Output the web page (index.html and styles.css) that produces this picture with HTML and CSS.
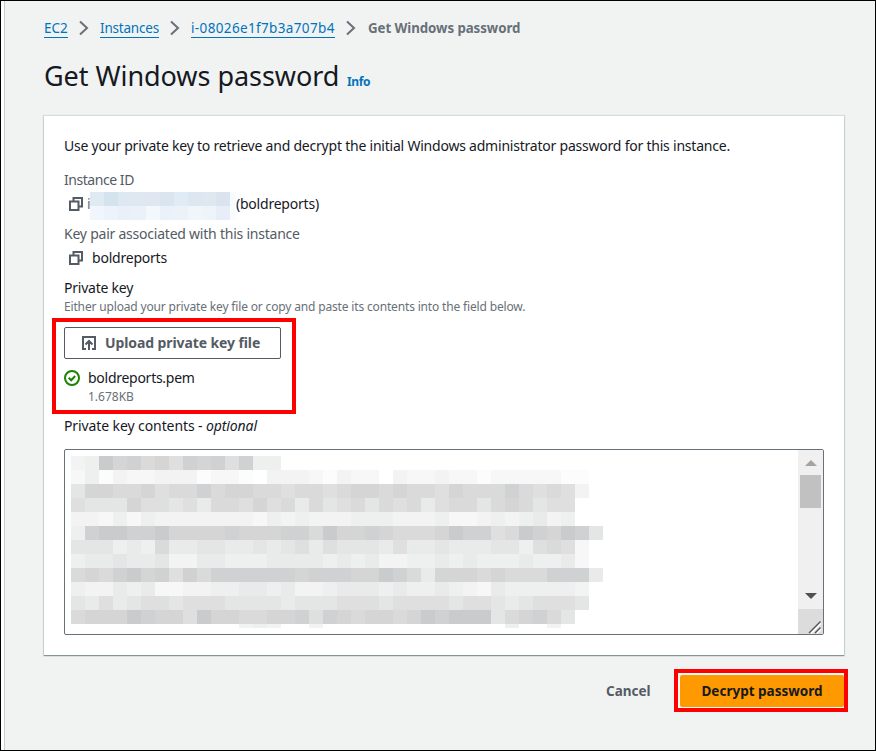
FILE: index.html
```html
<!DOCTYPE html>
<html lang="en">
<head>
<meta charset="utf-8">
<title>Get Windows password</title>
<link rel="stylesheet" href="styles.css">
</head>
<body>
<div class="page">
  <nav class="crumbs">
    <a class="c1"><span>EC2</span></a>
    <svg viewBox="0 0 10 16"><path d="M1 1.500 8 8 1 14.500"/></svg>
    <a class="c2"><span>Instances</span></a>
    <svg viewBox="0 0 10 16"><path d="M1 1.500 8 8 1 14.500"/></svg>
    <a class="c3"><span>i-08026e1f7b3a707b4</span></a>
    <svg viewBox="0 0 10 16"><path d="M1 1.500 8 8 1 14.500"/></svg>
    <b>Get Windows password</b>
  </nav>
  <header><h1>Get Windows password</h1><a class="info">Info</a></header>
  <main class="card">
    <p class="intro">Use your private key to retrieve and decrypt the initial Windows administrator password for this instance.</p>
    <div class="label id-label">Instance ID</div>
    <div class="value">
      <svg class="copy" viewBox="0 0 14 14"><path d="M4.500 4V1H13v8.500h-3M1 4.500h8.500V13H1z"/></svg>
      <span class="first">i</span><span class="redacted" id="redacted"></span><span class="owner">(boldreports)</span>
    </div>
    <div class="label pair-label">Key pair associated with this instance</div>
    <div class="value">
      <svg class="copy" viewBox="0 0 14 14"><path d="M4.500 4V1H13v8.500h-3M1 4.500h8.500V13H1z"/></svg>
      <span class="pair">boldreports</span>
    </div>
    <div class="label dark">Private key</div>
    <div class="hint"><span>Either upload your private key file or copy and paste its contents into the field below.</span></div>
    <section class="upload">
      <button class="btn-upload"><svg viewBox="0 0 14 14"><path d="M4 13H1V1h12v12h-3M7 14V5M3.500 8.500 7 5l3.500 3.500"/></svg><span>Upload private key file</span></button>
      <div class="file">
        <svg viewBox="0 0 16 16"><circle cx="8" cy="8" r="7"/><path d="m4.700 7.700 2.500 2.500 4-4.200"/></svg>
        <div><div class="fname"><span>boldreports.pem</span></div><div class="fsize">1.678KB</div></div>
      </div>
    </section>
    <div class="label dark contents"><span>Private key contents - <i>optional</i></span></div>
    <div class="textarea">
      <div class="mosaic" id="mosaic"></div>
      <div class="scroll">
        <svg class="up" viewBox="0 0 12 6"><path d="M0 6 6 0l6 6z"/></svg>
        <div class="thumb"></div>
        <svg class="down" viewBox="0 0 12 6"><path d="M0 0h12L6 6z"/></svg>
        <div class="corner"><svg viewBox="0 0 14 14"><path class="lit" d="m3 13.500 10-10M9 13.500l4-4"/><path d="M1 13 12.500 1.500M7 13l5.500-5.500"/></svg></div>
      </div>
    </div>
  </main>
  <footer>
    <a class="cancel">Cancel</a>
    <div class="ring"><button class="primary"><span>Decrypt password</span></button></div>
  </footer>
</div>
<script src="script.js"></script>
</body>
</html>
```
FILE: styles.css
```css
* { box-sizing: border-box; }
body { margin: 0; font-family: "Noto Sans", "Open Sans", sans-serif; font-size: 14px; color: #16191f; background: #fff; }
.page { width: 876px; height: 751px; border: 1px solid #000; padding-left: 39px; background: linear-gradient(90deg, #fff 3px, #c9ccd3 3px, #c9ccd3 4px, #f1f3f3 4px); overflow: hidden; }
svg { display: block; flex: none; fill: none; }
a, span, b, h1 { white-space: nowrap; }
.crumbs { display: flex; align-items: center; height: 22px; margin: 16px 0 0 4px; line-height: 20px; font-size: 13.5px; }
.crumbs a { color: #0073bb; border-bottom: 1px solid #0073bb; height: 20px; line-height: 20px; }
.crumbs svg { width: 10px; height: 16px; margin: 0 11px; stroke: #687078; stroke-width: 2; }
.c1 { width: 24px; }
.c2 { width: 59px; letter-spacing: -0.2px; }
.c3 { width: 144px; letter-spacing: 0.36px; }
.crumbs b { color: #687078; font-weight: 700; margin-left: 1px; font-size: 13.3px; letter-spacing: -0.07px; }
header { display: flex; align-items: baseline; height: 76px; margin-left: 4px; padding-top: 19px; }
h1 { width: 303px; margin: 0; font-size: 27px; line-height: 36px; font-weight: 400; letter-spacing: -0.05px; }
.info { color: #0073bb; font-size: 12px; font-weight: 700; letter-spacing: -0.4px; }
.card { width: 800px; height: 539px; margin: 1px 0 0 4px; padding: 19px 20px 0; background: #fff; box-shadow: 0 1px 1px #879596, 0 0 1px 1px #d5dbdb; }
.intro { margin: 0; height: 35px; line-height: 22px; white-space: nowrap; letter-spacing: -0.22px; }
.label { height: 20px; line-height: 20px; color: #545b64; letter-spacing: -0.23px; }
.id-label { letter-spacing: -0.45px; }
.dark { color: #16191f; }
.value { display: flex; align-items: flex-start; height: 28px; margin: 2px 0 4px; padding-left: 5px; line-height: 20px; letter-spacing: -0.22px; }
.value .copy { margin-top: 5px; }
.value .first, .value .owner { margin-top: 2px; }
.pair-label + .value { height: 24px; margin-bottom: 8px; }
.copy { width: 14px; height: 14px; stroke: #545b64; stroke-width: 2; }
.first { width: 7px; padding-left: 4px; color: #687078; }
.redacted { display: grid; grid-template-columns: repeat(10, 14px) 6px; grid-template-rows: 14px 14px; position: relative; }
.pair { margin: 2px 0 0 9px; }
.hint { height: 18px; line-height: 18px; color: #687078; font-size: 12px; letter-spacing: -0.16px; }
.upload { width: 244px; height: 96px; margin: 2px 0 0 -12px; border: 4px solid #f00; padding: 5px 8px; }
.btn-upload { display: flex; align-items: center; width: 217px; height: 32px; padding: 0 0 2px 17px; border: 1px solid #545b64; border-radius: 2px; background: #fff; color: #545b64; font: 700 14px "Noto Sans", sans-serif; letter-spacing: -0.1px; }
.btn-upload svg { width: 14px; height: 14px; margin: 2px 9px 0 0; stroke: #545b64; stroke-width: 2; }
.file { display: flex; margin-top: 9px; gap: 8px; }
.file svg { width: 16px; height: 16px; margin-top: 2px; stroke: #1d8102; stroke-width: 2; }
.fname { height: 20px; line-height: 20px; letter-spacing: -0.27px; }
.fsize { font-size: 12px; line-height: 17px; color: #687078; }
.contents { margin-top: 2px; letter-spacing: -0.1px; }
.textarea { display: flex; justify-content: space-between; width: 760px; height: 186px; margin-top: 13px; border: 1px solid #687078; border-radius: 2px; padding: 6px 0 0 6px; }
.mosaic { display: grid; grid-template-columns: repeat(38, 14px); grid-template-rows: repeat(12, 14px) 4px; align-content: start; }
.scroll { display: flex; flex-direction: column; align-items: center; width: 25px; height: 184px; margin-top: -6px; padding-top: 10px; background: #f0f0f0; }
.up, .down { width: 12px; height: 6px; fill: #a3a3a3; }
.thumb { width: 21px; height: 33px; margin-top: 9px; background: #c1c1c1; }
.down { fill: #505050; margin-top: 85px; }
.corner { width: 25px; height: 25px; margin-top: auto; padding: 11px 0 0 10px; background: #dcdcdc; }
.corner svg { width: 14px; height: 14px; stroke: #505050; stroke-width: 1.3; }
.corner .lit { stroke: #fff; }
footer { display: flex; align-items: center; justify-content: flex-end; width: 808px; margin-top: 14px; height: 43px; }
.cancel { width: 68px; color: #545b64; font-weight: 700; font-size: 13.5px; }
.ring { width: 174px; height: 43px; border: 4px solid #f00; padding: 2px 0 0 2px; background: #fafafa; }
.primary { display: block; width: 164px; height: 32px; border: 0; border-radius: 2px; padding: 0; background: #ff9900; color: #16191f; font: 700 13.5px "Noto Sans", sans-serif; }
```
FILE: script.js
```js
const shades = ['#fff', '#fcfcfc', '#f7f7f7', '#f3f3f3', '#eeefef', '#e9eaea', '#e4e5e5', '#dfdfdf', '#dadada', '#d5d5d6', '#d0d1d2', '#cacbcc'];
const rows = [
  '34b9a897a9a7a44',
  '2413223331221033321' + '322032232212222211',
  '699889788a899887887' + '899898879888a878730',
  '7666977675887978586' + '786878578868986770',
  '3324243333333243433' + '344433342234345340',
  '4abbaab9999a999aa8b' + '99a98889baa78ba9ba6',
  '6664548556655656757' + '666575565556647872',
  '4556556335544455554' + '545334454544454452',
  '898ab9a7a8aaaaaa9aa' + 'a99ba8599989888aaa5',
  '4335452233445545334' + '555454454325444443',
  '6575677677766665666' + '777677776776567776',
  '8999ba997b99889' + '9a7a' + '989989babbb689a860',
  '0000000000003430030' + '000000000000400300'
];
function fill(id, list) {
  const host = document.getElementById(id);
  for (const colour of list) {
    const cell = document.createElement('span');
    cell.style.background = colour;
    host.append(cell);
  }
}
fill('mosaic', rows.flatMap(r => [...r.padEnd(38, '0').slice(0, 38)].map(c => shades[parseInt(c, 16)])));
fill('redacted', ['#e0eaf3', '#d5e3ef', '#dde8f2', '#dfe8f1', '#dfe8f1', '#dae5f0', '#e0ebf5', '#dce7f1', '#dfe8f1', '#d9e4ef', '#f5fbff',
  '#f0f6fb', '#edf3fa', '#e9f0f8', '#ebf1f8', '#f3f8fc', '#ebf1f8', '#edf2f8', '#f1f6fb', '#edf4fa', '#e7eef7', '#f8fcff']);
```
